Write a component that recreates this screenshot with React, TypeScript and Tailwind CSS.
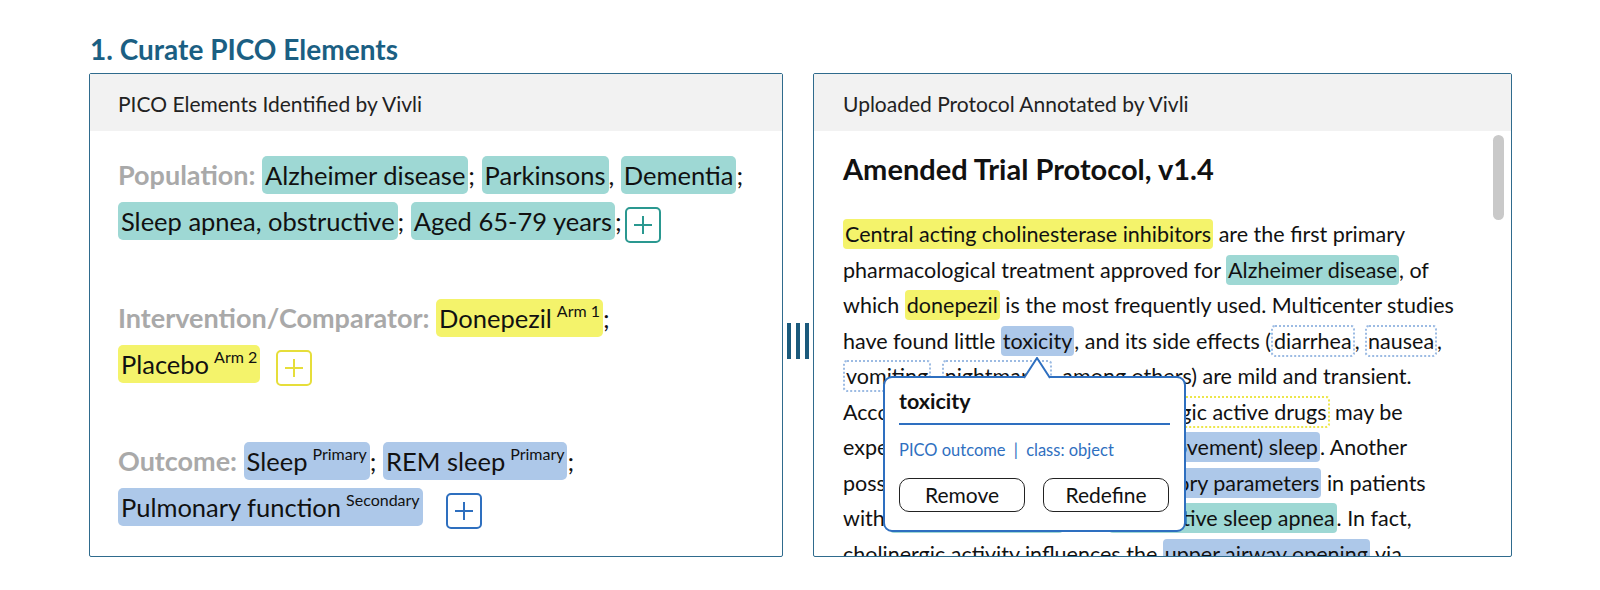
import React from "react";

type Tone = "teal" | "yellow" | "blue";

const chipBg: Record<Tone, string> = {
  teal: "bg-[#9ed8d4]",
  yellow: "bg-[#f4f36b]",
  blue: "bg-[#adc8e9]",
};

const dotBorder: Record<"blue" | "yellow", string> = {
  blue: "border-[#9cbbe3]",
  yellow: "border-[#ece649]",
};

const PlusBox = ({ color, className = "" }: { color: string; className?: string }) => (
  <span
    className={`inline-flex h-[36px] w-[36px] items-center justify-center rounded-[5px] border-2 align-middle ${className}`}
    style={{ borderColor: color }}
  >
    <svg width="20" height="20" viewBox="0 0 20 20">
      <path d="M10 1v18M1 10h18" stroke={color} strokeWidth="2" fill="none" />
    </svg>
  </span>
);

const Tag = ({ tone, sup, children }: { tone: Tone; sup?: string; children: React.ReactNode }) => (
  <span className={`${chipBg[tone]} rounded-[5px] px-[3px] py-[4px]`}>
    {children}
    {sup && <span className="relative -top-[11px] ml-[5px] text-[16px] leading-none">{sup}</span>}
  </span>
);

const Label = ({ children }: { children: React.ReactNode }) => (
  <span className="text-[27px] font-bold leading-none text-[#a9a9a9]">{children}</span>
);

const LeftPanel = () => (
  <div className="flex h-[484px] w-[694px] flex-col rounded-[2px] border border-[#2f6b8d]">
    <div className="flex h-[57px] items-center bg-[#f2f2f2] pl-[28px] pt-[3px] text-[21px] text-[#222]">
      PICO Elements Identified by Vivli
    </div>
    <div className="pl-[28px] pt-[21px] text-[25.5px] leading-[46px] text-[#111]">
      <div className="mb-[51px]">
        <div className="whitespace-nowrap">
          <Label>Population:</Label> <Tag tone="teal">Alzheimer disease</Tag>; <Tag tone="teal">Parkinsons</Tag>,{" "}
          <Tag tone="teal">Dementia</Tag>;
        </div>
        <div className="whitespace-nowrap">
          <Tag tone="teal">Sleep apnea, obstructive</Tag>; <Tag tone="teal">Aged 65-79 years</Tag>;{" "}
          <PlusBox color="#2a9890" className="-ml-[3px]" />
        </div>
      </div>
      <div className="mb-[51px]">
        <div className="whitespace-nowrap">
          <Label>Intervention/Comparator:</Label>{" "}
          <Tag tone="yellow" sup="Arm 1">
            Donepezil
          </Tag>
          ;
        </div>
        <div className="whitespace-nowrap">
          <Tag tone="yellow" sup="Arm 2">
            Placebo
          </Tag>{" "}
          <PlusBox color="#e6de3a" className="ml-[9px]" />
        </div>
      </div>
      <div>
        <div className="whitespace-nowrap">
          <Label>Outcome:</Label>{" "}
          <Tag tone="blue" sup="Primary">
            Sleep
          </Tag>
          ;{" "}
          <Tag tone="blue" sup="Primary">
            REM sleep
          </Tag>
          ;
        </div>
        <div className="whitespace-nowrap">
          <Tag tone="blue" sup="Secondary">
            Pulmonary function
          </Tag>{" "}
          <PlusBox color="#2e6fbf" className="ml-[17px]" />
        </div>
      </div>
    </div>
  </div>
);

const Hl = ({ tone, children }: { tone: Tone; children: React.ReactNode }) => (
  <span className={`${chipBg[tone]} rounded-[4px] px-[2px] py-[2px]`}>{children}</span>
);

const Dot = ({ tone, children }: { tone: "blue" | "yellow"; children: React.ReactNode }) => (
  <span className={`rounded-[4px] border-2 border-dotted ${dotBorder[tone]} px-[1px] py-[1px]`}>{children}</span>
);

const Popover = () => (
  <div className="absolute left-[69px] top-[302px] h-[156px] w-[303px] rounded-[9px] border-2 border-[#2e6fc0] bg-white px-[14px]">
    <svg className="absolute left-[139px] top-[-21px]" width="26" height="22" viewBox="0 0 26 22">
      <polygon points="0,22 13,1 26,22" fill="white" />
      <polyline points="0,21 13,1 26,21" fill="none" stroke="#2e6fc0" strokeWidth="2" />
    </svg>
    <div className="border-b-2 border-[#2e6fc0] pb-[8px] pt-[9px] text-[21.5px] font-bold leading-[28px] text-[#111]">
      toxicity
    </div>
    <div className="mt-[13px] text-[16.5px] leading-[24px] text-[#2f6fc0]">
      PICO outcome <span className="mx-[4px]">|</span> class: object
    </div>
    <div className="mt-[16px] flex gap-[18px]">
      <button className="h-[34px] w-[126px] rounded-[10px] border border-[#222] text-[21px] text-[#111]">
        Remove
      </button>
      <button className="h-[34px] w-[126px] rounded-[10px] border border-[#222] text-[21px] text-[#111]">
        Redefine
      </button>
    </div>
  </div>
);

const RightPanel = () => (
  <div className="relative flex h-[484px] w-[699px] flex-col overflow-hidden rounded-[2px] border border-[#2f6b8d]">
    <div className="flex h-[57px] shrink-0 items-center bg-[#f2f2f2] pl-[29px] pt-[3px] text-[21px] text-[#222]">
      Uploaded Protocol Annotated by Vivli
    </div>
    <div className="flex min-h-0 flex-1">
      <div className="min-w-0 flex-1 overflow-hidden pl-[29px] pt-[20px]">
        <div className="text-[29px] font-bold leading-[36px] text-[#111]">Amended Trial Protocol, v1.4</div>
        <div className="mt-[30px] whitespace-nowrap text-[21.5px] leading-[35.5px] text-[#111]">
          <div>
            <Hl tone="yellow">Central acting cholinesterase inhibitors</Hl> are the first primary
          </div>
          <div>
            pharmacological treatment approved for <Hl tone="teal">Alzheimer disease</Hl>, of
          </div>
          <div>
            which <Hl tone="yellow">donepezil</Hl> is the most frequently used. Multicenter studies
          </div>
          <div>
            have found little <Hl tone="blue">toxicity</Hl>, and its side effects (<Dot tone="blue">diarrhea</Dot>,{" "}
            <Dot tone="blue">nausea</Dot>,
          </div>
          <div>
            <Dot tone="blue">vomiting</Dot>, <Dot tone="blue">nightmares</Dot>, among others) are mild and transient.
          </div>
          <div>
            According to such findings, <Dot tone="yellow">cholinergic active drugs</Dot> may be
          </div>
          <div>
            expected to help <Hl tone="blue">REM (rapid eye movement) sleep</Hl>. Another
          </div>
          <div>
            possible effect is improving <Hl tone="blue">respiratory parameters</Hl> in patients
          </div>
          <div>
            with <Hl tone="teal">Alzheimer disease</Hl> and <Hl tone="teal">obstructive sleep apnea</Hl>. In fact,
          </div>
          <div>
            cholinergic activity influences the <Hl tone="blue">upper airway opening</Hl> via
          </div>
        </div>
      </div>
      <div className="mr-[7px] mt-[4px] h-[85px] w-[11px] shrink-0 rounded-full bg-[#c9c9c9]" />
    </div>
    <Popover />
  </div>
);

const Handle = () => (
  <div className="flex w-[30px] justify-center gap-[5px] pt-[250px]">
    <div className="h-[36px] w-[4px] bg-[#1b5a7c]" />
    <div className="h-[36px] w-[4px] bg-[#1b5a7c]" />
    <div className="h-[36px] w-[4px] bg-[#1b5a7c]" />
  </div>
);

export default function App() {
  return (
    <div className="h-[590px] w-[1600px] bg-white pl-[89px] pt-[33px] font-['Lato','Liberation_Sans',sans-serif]">
      <h1 className="pl-[1px] text-[28px] font-bold leading-[32px] text-[#1b5f83]">1. Curate PICO Elements</h1>
      <div className="mt-[8px] flex items-start">
        <LeftPanel />
        <Handle />
        <RightPanel />
      </div>
    </div>
  );
}
